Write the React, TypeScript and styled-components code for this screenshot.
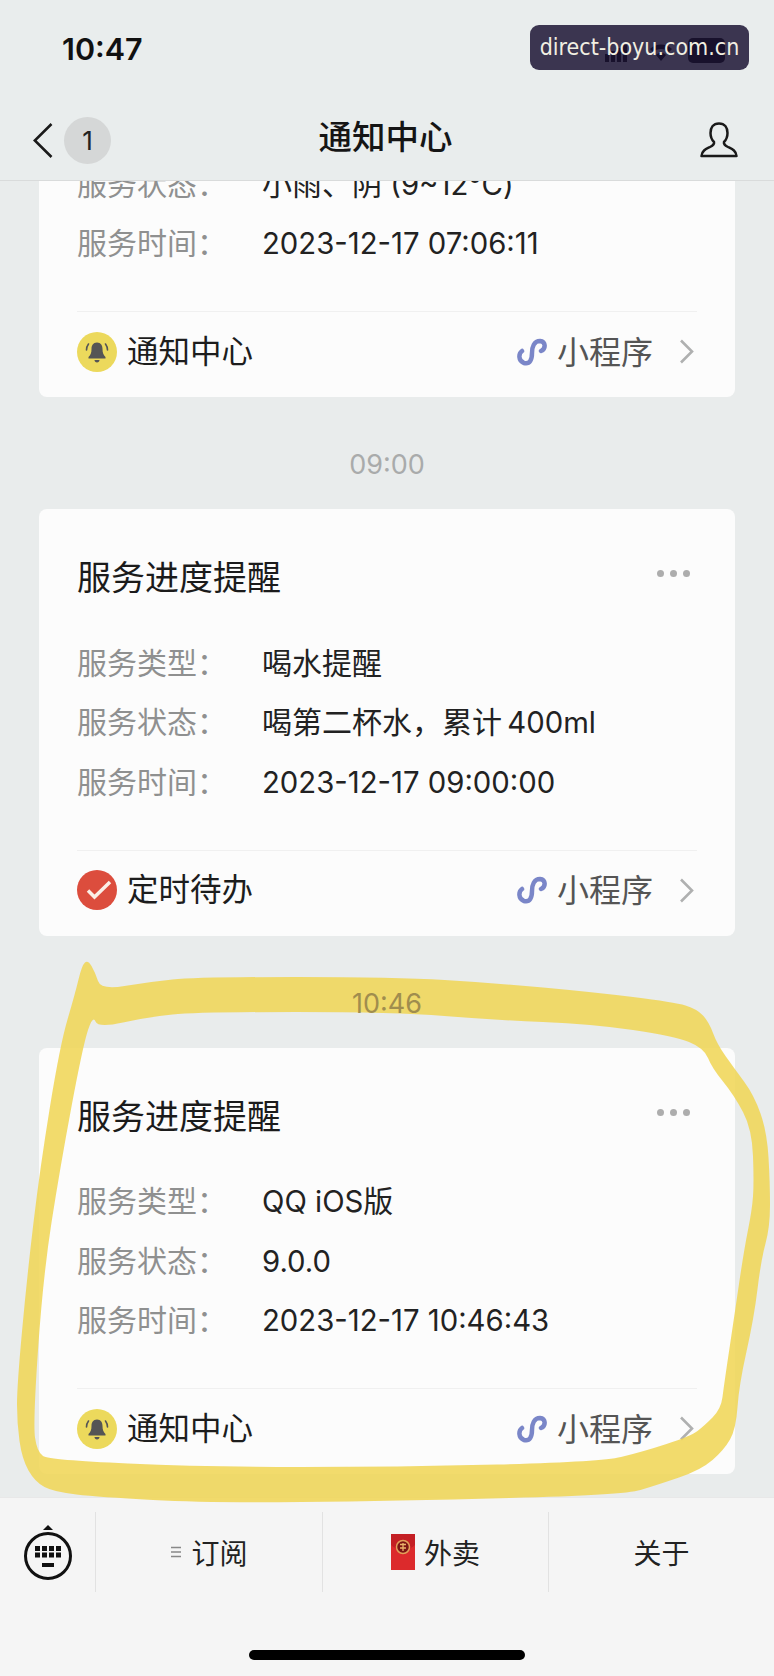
import * as React from 'react';
import styled, {createGlobalStyle} from 'styled-components';

const GlobalStyle = createGlobalStyle`
  html, body {
    margin: 0;
    padding: 0;
    background: #e9ecec;
  }
  * {
    box-sizing: border-box;
  }
`;

const FONT = `'Liberation Sans', 'Noto Sans CJK SC', sans-serif`;
const CJK_FONT = `'Noto Sans CJK SC', sans-serif`;

const Page = styled.div`
  position: relative;
  width: 774px;
  height: 1676px;
  overflow: hidden;
  display: flex;
  flex-direction: column;
  background: #e9ecec;
  font-family: ${FONT};
  color: #1d1d1d;
`;

const Header = styled.header`
  flex: 0 0 181px;
  background: #e9eded;
  border-bottom: 1px solid #d9dbdb;
`;

const StatusBar = styled.div`
  height: 100px;
  padding: 37px 49px 0 62px;
  display: flex;
  justify-content: space-between;
  align-items: flex-start;
`;

const Clock = styled.span`
  font-family: Inter, sans-serif;
  font-size: 30.5px;
  font-weight: 600;
  line-height: 24px;
  color: #111;
`;

const Watermark = styled.div`
  position: absolute;
  top: 25px;
  right: 25px;
  width: 219px;
  height: 45px;
  border-radius: 9px;
  background: rgba(28, 20, 52, 0.85);
  color: #f1efe2;
  font-family: 'DejaVu Sans Condensed', 'DejaVu Sans', sans-serif;
  font-stretch: condensed;
  font-size: 23px;
  line-height: 45px;
  text-align: center;
  white-space: nowrap;
`;

const NavBar = styled.nav`
  height: 80px;
  padding: 0 36px 0 33px;
  display: grid;
  grid-template-columns: 1fr auto 1fr;
  align-items: center;
`;

const NavLeft = styled.div`
  display: flex;
  align-items: center;
  gap: 11px;
`;

const Badge = styled.span`
  width: 47px;
  height: 47px;
  border-radius: 50%;
  background: #d5d7d7;
  display: flex;
  align-items: center;
  justify-content: center;
  font-family: Inter, sans-serif;
  font-size: 26px;
  color: #222;
`;

const NavTitle = styled.h1`
  margin: 0 0 4px;
  font-size: 33.5px;
  font-weight: 500;
  line-height: 44px;
  color: #151515;
`;

const NavRight = styled.div`
  display: flex;
  justify-content: flex-end;
`;

const Feed = styled.main`
  flex: 1;
  min-height: 0;
  overflow: hidden;
  display: flex;
  flex-direction: column;
  justify-content: flex-end;
  padding: 0 39px 23px;
`;

const TimeLabel = styled.div<{$marked?: boolean}>`
  flex: 0 0 112px;
  padding-top: 48px;
  text-align: center;
  font-family: Inter, sans-serif;
  font-size: 27px;
  line-height: 40px;
  color: ${({$marked}) => ($marked ? '#a08d4e' : '#a9abab')};
  position: relative;
  z-index: ${({$marked}) => ($marked ? 2 : 0)};
`;

const Card = styled.section`
  flex-shrink: 0;
  background: #fcfcfc;
  border-radius: 8px;
  padding: 44px 38px 0;
`;

const TitleRow = styled.div`
  display: flex;
  justify-content: space-between;
  margin-bottom: 31px;
`;

const CardTitle = styled.h2`
  margin: 0;
  font-size: 34px;
  font-weight: 400;
  line-height: 50px;
  color: #1b1b1b;
`;

const Dots = styled.div`
  display: flex;
  gap: 6px;
  margin: 17px 7px 0 0;
`;

const Dot = styled.span`
  width: 7px;
  height: 7px;
  border-radius: 50%;
  background: #adadad;
`;

const Row = styled.div`
  display: flex;
  height: 59.5px;
  align-items: center;
  font-size: 30px;
  line-height: 40px;
`;

const RowLabel = styled.span`
  flex: 0 0 185px;
  color: #8f9090;
`;

const RowValue = styled.span`
  font-family: Inter, sans-serif;
  font-size: 29.3px;
  color: #222;
  white-space: nowrap;
`;

const Cjk = styled.span`
  font-family: ${CJK_FONT};
  font-size: 30px;
  line-height: 1;
`;

const CardFooter = styled.div`
  margin-top: 37px;
  height: 86px;
  padding: 0 3px 6px 0;
  border-top: 1px solid #f0f0f0;
  display: flex;
  align-items: center;
`;

const SourceIcon = styled.span<{$bg: string}>`
  width: 40px;
  height: 40px;
  border-radius: 50%;
  background: ${({$bg}) => $bg};
  display: flex;
  align-items: center;
  justify-content: center;
  margin-right: 10px;
`;

const SourceName = styled.span`
  flex: 1;
  margin-bottom: 6px;
  font-size: 31.5px;
  color: #1d1d1d;
`;

const MiniLabel = styled.span`
  margin: 0 26px 4px 10px;
  font-size: 32px;
  color: #555;
`;

const TabBar = styled.footer`
  flex: 0 0 179px;
  background: #f5f5f5;
  border-top: 1px solid #e8e8e8;
  padding-top: 14px;
  display: flex;
  flex-direction: column;
  align-items: center;
`;

const Tabs = styled.div`
  width: 100%;
  height: 80px;
  display: grid;
  grid-template-columns: 95px 227px 226px 226px;
`;

const KeyboardCell = styled.div`
  display: flex;
  align-items: center;
  justify-content: center;
  padding-top: 2px;
`;

const Tab = styled.div`
  border-left: 1px solid #e2e2e2;
  display: flex;
  align-items: center;
  justify-content: center;
  gap: 9px;
  font-size: 28px;
  color: #222;
`;

const HomeIndicator = styled.div`
  width: 276px;
  height: 10px;
  margin-top: 58px;
  border-radius: 5px;
  background: #000;
`;

const Highlight = styled.svg`
  position: absolute;
  top: 0;
  left: 0;
  z-index: 1;
  pointer-events: none;
  opacity: 0.86;
`;

// hand-drawn marker ring, traced from the outer and the inner edge of the stroke
const OUTER: number[][] = [
  [88, 960], [95, 972], [101, 990], [148, 982], [197, 977], [395, 977], [494, 983], [592, 992], [674, 1002],
  [697, 1009], [709, 1022], [717, 1044], [734, 1068], [754, 1095], [767, 1132], [770, 1183], [770, 1227],
  [761, 1260], [754, 1318], [739, 1385], [736, 1429], [724, 1450], [701, 1470], [657, 1485], [624, 1495],
  [395, 1501], [207, 1503], [99, 1497], [54, 1492], [35, 1482], [22, 1459], [17, 1423], [17, 1386],
  [27, 1277], [40, 1168], [60, 1045], [75, 994], [82, 965],
];
const INNER: number[][] = [
  [98, 1028], [148, 1017], [197, 1012], [395, 1012], [494, 1020], [592, 1024], [674, 1036], [704, 1048],
  [712, 1068], [734, 1095], [752, 1129], [754, 1183], [752, 1210], [744, 1250], [734, 1318], [724, 1385],
  [721, 1409], [704, 1426], [691, 1436], [642, 1452], [600, 1462], [395, 1467], [207, 1467], [49, 1460],
  [37, 1452], [33, 1423], [43, 1277], [60, 1168], [83, 1045], [93, 1015],
];

const smoothPath = (pts: number[][]) => {
  const mid = (a: number[], b: number[]) => `${(a[0] + b[0]) / 2} ${(a[1] + b[1]) / 2}`;
  let d = `M${mid(pts[pts.length - 1], pts[0])}`;
  pts.forEach((p, i) => {
    d += ` Q${p[0]} ${p[1]} ${mid(p, pts[(i + 1) % pts.length])}`;
  });
  return d + 'Z';
};

// digits and latin take the UI face, chinese runs get the CJK face at their own size
const renderValue = (value: string) =>
  value.split(/([\u3000-\u9fff\uff00-\uffef]+)/).map((part, i) =>
    /[\u3000-\u9fff\uff00-\uffef]/.test(part) ? <Cjk key={i}>{part}</Cjk> : part,
  );

const BellIcon = () => (
  <svg width="26" height="26" viewBox="0 0 26 26" fill="none">
    <path d="M13 3.500c-4 0-5.500 3-5.500 6.500 0 4-1 6-3 8v1.500h17V18c-2-2-3-4-3-8 0-3.500-1.500-6.500-5.500-6.500z" fill="#555" />
    <path d="M10.500 21h5c0 1.500-1 2.500-2.500 2.500s-2.500-1-2.500-2.500z" fill="#555" />
    <path d="M4.500 5C3 7 2.500 9 2.500 11M21.500 5c1.500 2 2 4 2 6" stroke="#555" strokeWidth="1.600" strokeLinecap="round" />
  </svg>
);

const CheckIcon = () => (
  <svg width="32" height="28" viewBox="0 0 32 28" fill="none">
    <path d="M7 14.500l6.500 6.500L29 6" stroke="#fbeee6" strokeWidth="3.500" strokeLinejoin="miter" />
  </svg>
);

const MiniProgramIcon = () => (
  <svg width="32" height="28" viewBox="0 0 32 28" fill="none">
    <path
      d="M7 13c-3.500 2.500-4 10 2 12 6 1.500 8-3.500 8-10 0-6 2-12 8-12 6 .5 6 8 1 10"
      stroke="#7a86c8"
      strokeWidth="4.500"
      strokeLinecap="round"
    />
  </svg>
);

const Chevron = () => (
  <svg width="15" height="25" viewBox="0 0 15 25" fill="none">
    <path d="M2 1.500L13 12.500 2 23.500" stroke="#afb0b0" strokeWidth="2.600" />
  </svg>
);

const BackIcon = () => (
  <svg width="20" height="35" viewBox="0 0 20 35" fill="none">
    <path d="M18.500 1L1.800 17.500 18.500 34" stroke="#1a1a1a" strokeWidth="2.600" />
  </svg>
);

const PersonIcon = () => (
  <svg width="38" height="36" viewBox="0 0 38 36" fill="none">
    <path
      d="M19 1.500c-6 0-8.500 4.500-8.500 9.500 0 4 1.500 7 3.500 9 .5 2-1 3.500-4 5-4 2-8 3.500-8.500 9h35c-.5-5.500-4.500-7-8.500-9-3-1.500-4.500-3-4-5 2-2 3.500-5 3.500-9 0-5-2.500-9.500-8.500-9.500z"
      stroke="#1a1a1a"
      strokeWidth="2.500"
      strokeLinejoin="round"
    />
  </svg>
);

const StatusIcons = () => (
  <svg width="125" height="26" viewBox="0 0 125 26" fill="#000">
    <rect x="5" y="17" width="4" height="8" />
    <rect x="11" y="14" width="4" height="11" />
    <rect x="17" y="11" width="4" height="14" />
    <rect x="23" y="8" width="4" height="17" />
    <path d="M50 12c6-6 16-6 22 0l-3 3c-4-4-12-4-16 0zM56 18c3-3 7-3 10 0l-5 6z" />
    <rect x="88" y="1" width="37" height="25" rx="5" />
  </svg>
);

const KeyboardIcon = () => (
  <svg width="50" height="56" viewBox="0 0 50 56" fill="#111">
    <path d="M25 0l5 5H20z" />
    <circle cx="25" cy="31" r="22.500" fill="none" stroke="#111" strokeWidth="3" />
    {[0, 1].map((r) =>
      [0, 1, 2, 3].map((c) => <rect key={`${r}-${c}`} x={12 + c * 7} y={21 + r * 6.500} width="5" height="5" />),
    )}
    <rect x="19" y="38" width="12" height="4" />
  </svg>
);

const MenuIcon = () => (
  <svg width="12" height="12" viewBox="0 0 12 12" stroke="#888" strokeWidth="1.300">
    <path d="M1 1.500h10M1 6h10M1 10.500h10" />
  </svg>
);

const RedPacketIcon = () => (
  <svg width="24" height="36" viewBox="0 0 24 36">
    <rect width="24" height="36" fill="#dc2a2c" />
    <path d="M0 0h24v11c-6 6-18 6-24 0z" fill="#c41f24" />
    <circle cx="12" cy="13" r="6.500" fill="#7c1414" stroke="#e2a05a" strokeWidth="1.500" />
    <path d="M9 10.500h6M12 9v8M9 14h6" stroke="#eab26a" strokeWidth="1.300" />
  </svg>
);

interface CardData {
  time?: string;
  marked?: boolean;
  title?: string;
  rows: {label: string; value: string}[];
  source: string;
  kind: 'bell' | 'check';
}

const CARDS: CardData[] = [
  {
    rows: [
      {label: '服务状态：', value: '小雨、阴 (9~12°C)'},
      {label: '服务时间：', value: '2023-12-17 07:06:11'},
    ],
    source: '通知中心',
    kind: 'bell',
  },
  {
    time: '09:00',
    title: '服务进度提醒',
    rows: [
      {label: '服务类型：', value: '喝水提醒'},
      {label: '服务状态：', value: '喝第二杯水，累计\u2009400ml'},
      {label: '服务时间：', value: '2023-12-17 09:00:00'},
    ],
    source: '定时待办',
    kind: 'check',
  },
  {
    time: '10:46',
    marked: true,
    title: '服务进度提醒',
    rows: [
      {label: '服务类型：', value: 'QQ iOS版'},
      {label: '服务状态：', value: '9.0.0'},
      {label: '服务时间：', value: '2023-12-17 10:46:43'},
    ],
    source: '通知中心',
    kind: 'bell',
  },
];

const App = () => (
  <Page>
    <GlobalStyle />
    <Header>
      <StatusBar>
        <Clock>10:47</Clock>
        <StatusIcons />
      </StatusBar>
      <NavBar>
        <NavLeft>
          <BackIcon />
          <Badge>1</Badge>
        </NavLeft>
        <NavTitle>通知中心</NavTitle>
        <NavRight>
          <PersonIcon />
        </NavRight>
      </NavBar>
    </Header>
    <Feed>
      {CARDS.map((card) => (
        <React.Fragment key={card.source + card.rows[card.rows.length - 1].value}>
          {card.time && <TimeLabel $marked={card.marked}>{card.time}</TimeLabel>}
          <Card>
            {card.title && (
              <TitleRow>
                <CardTitle>{card.title}</CardTitle>
                <Dots>
                  <Dot />
                  <Dot />
                  <Dot />
                </Dots>
              </TitleRow>
            )}
            {card.rows.map((row) => (
              <Row key={row.label}>
                <RowLabel>{row.label}</RowLabel>
                <RowValue>{renderValue(row.value)}</RowValue>
              </Row>
            ))}
            <CardFooter>
              <SourceIcon $bg={card.kind === 'bell' ? '#ecd95c' : '#dc4d3d'}>
                {card.kind === 'bell' ? <BellIcon /> : <CheckIcon />}
              </SourceIcon>
              <SourceName>{card.source}</SourceName>
              <MiniProgramIcon />
              <MiniLabel>小程序</MiniLabel>
              <Chevron />
            </CardFooter>
          </Card>
        </React.Fragment>
      ))}
    </Feed>
    <TabBar>
      <Tabs>
        <KeyboardCell>
          <KeyboardIcon />
        </KeyboardCell>
        <Tab>
          <MenuIcon />
          订阅
        </Tab>
        <Tab>
          <RedPacketIcon />
          外卖
        </Tab>
        <Tab>关于</Tab>
      </Tabs>
      <HomeIndicator />
    </TabBar>
    <Watermark>direct-boyu.com.cn</Watermark>
    <Highlight width="774" height="1676" viewBox="0 0 774 1676">
      <path d={`${smoothPath(OUTER)} ${smoothPath(INNER)}`} fill="#f1d655" fillRule="evenodd" />
    </Highlight>
  </Page>
);

export default App;
